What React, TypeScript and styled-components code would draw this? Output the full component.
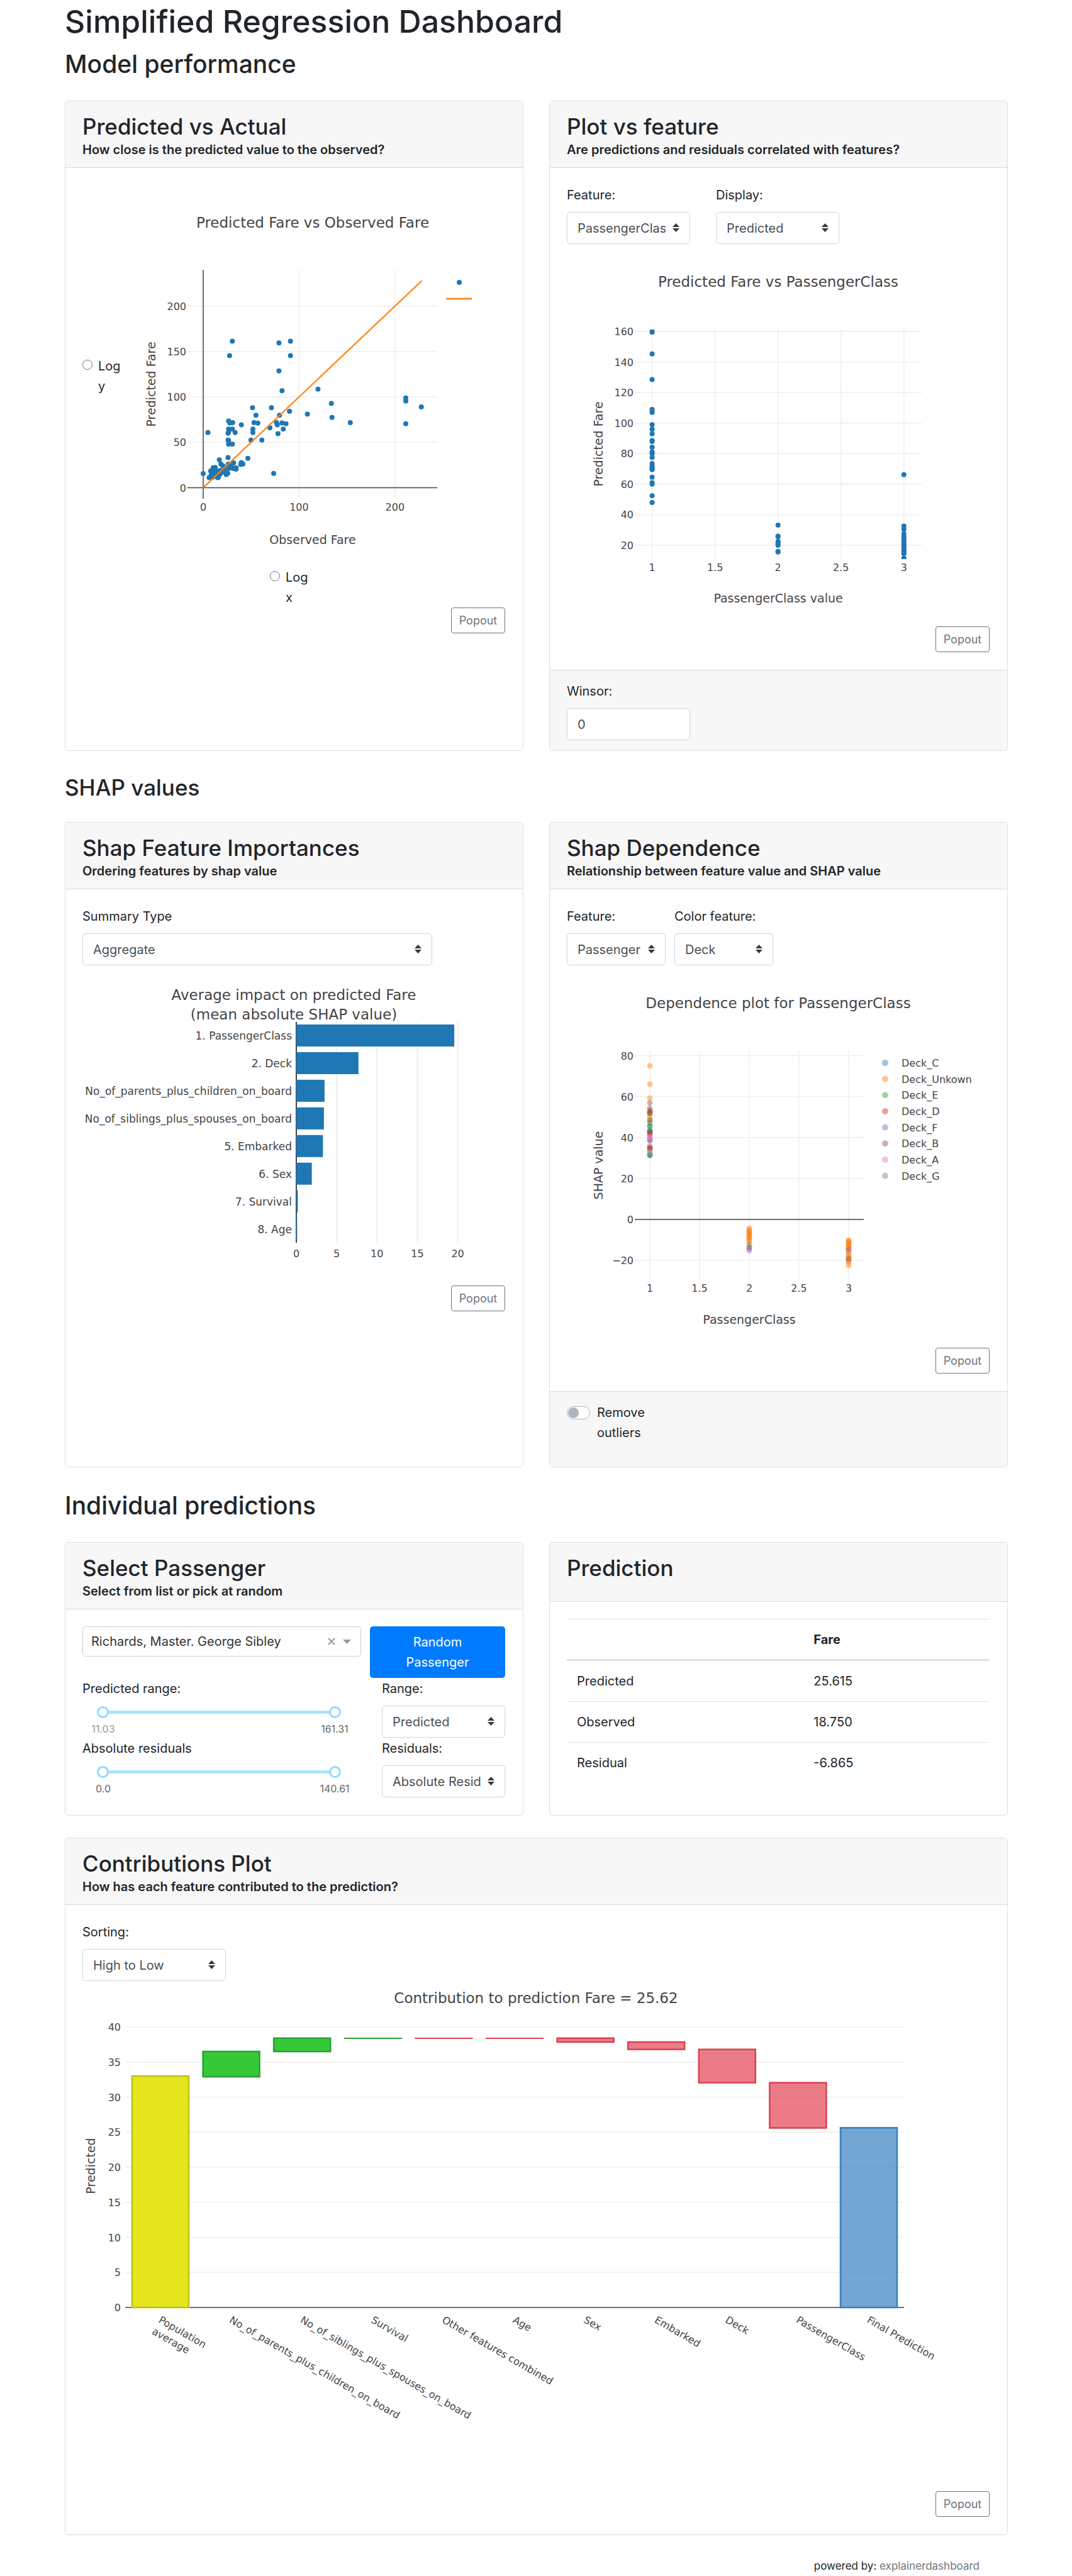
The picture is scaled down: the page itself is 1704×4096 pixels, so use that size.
import React, { useId, useState } from "react";
import styled, { createGlobalStyle } from "styled-components";

const sans = `Inter, "Liberation Sans", sans-serif`;
const plotFont = `"DejaVu Sans", Verdana, sans-serif`;

const GlobalStyle = createGlobalStyle`
  *, *::before, *::after { box-sizing: border-box; }
  body {
    margin: 0;
    background: #fff;
    color: #212529;
    font-family: ${sans};
    font-size: 20px;
    line-height: 32px;
  }
`;

const Page = styled.main`
  padding: 3px 102px 0 103px;
`;

const PageTitle = styled.h1`
  margin: 0 0 12px;
  font-size: 50px;
  line-height: 62px;
  font-weight: 500;
`;

const SectionTitle = styled.h2<{ $small?: boolean }>`
  margin: 0;
  font-size: ${(p) => (p.$small ? 35 : 39)}px;
  line-height: ${(p) => (p.$small ? 44 : 50)}px;
  font-weight: 500;
`;

const Section = styled.section`
  margin-bottom: 36px;
`;

const Deck = styled.div`
  display: grid;
  grid-template-columns: 1fr 1fr;
  gap: 41px;
  margin: 33px 0 35px;
`;

const Card = styled.article`
  display: flex;
  flex-direction: column;
  min-width: 0;
  border: 1px solid #dfdfdf;
  border-radius: 5px;
  overflow: hidden;
`;

const CardHeader = styled.header`
  padding: 20px 27px 16px;
  background: #f7f7f7;
  border-bottom: 1px solid #dadada;
`;

const CardTitle = styled.h3<{ $alone?: boolean }>`
  margin: 0 0 ${(p) => (p.$alone ? 16 : 4)}px;
  font-size: 35px;
  line-height: 41px;
  font-weight: 500;
`;

const CardSubtitle = styled.h4`
  margin: 0;
  font-size: 20px;
  line-height: 24px;
  font-weight: 600;
`;

const CardBody = styled.div`
  flex: 1;
  padding: 27px 28px 28px 27px;
`;

const CardFooter = styled.footer`
  padding: 17px 27px 16px;
  background: #f7f7f7;
  border-top: 1px solid #dadada;
`;

const FieldRow = styled.div<{ $gap: number }>`
  display: flex;
  gap: ${(p) => p.$gap}px;
`;

const FieldBox = styled.div<{ $width: number }>`
  width: ${(p) => p.$width}px;
  max-width: 100%;
`;

const FieldLabel = styled.label`
  display: block;
  margin-bottom: 11px;
`;

const SelectWrap = styled.div`
  position: relative;
`;

const SelectControl = styled.select`
  display: block;
  appearance: none;
  width: 100%;
  height: 51px;
  padding: 0 38px 0 16px;
  border: 1px solid #ced4da;
  border-radius: 5px;
  background: #fff;
  color: #495057;
  font: inherit;
`;

const Chevrons = styled.svg`
  position: absolute;
  right: 17px;
  top: 18px;
  width: 11px;
  height: 14px;
  pointer-events: none;
`;

const TextInput = styled.input`
  display: block;
  width: 196px;
  height: 51px;
  padding: 0 16px;
  border: 1px solid #ced4da;
  border-radius: 5px;
  background: #fff;
  color: #495057;
  font: inherit;
`;

const ButtonRow = styled.div`
  display: flex;
  justify-content: flex-end;
`;

const OutlineButton = styled.button`
  height: 41px;
  width: 86px;
  padding: 0;
  border: 1px solid #6c757d;
  border-radius: 4px;
  background: #fff;
  color: #6c757d;
  font-family: inherit;
  font-size: 18px;
`;

const PrimaryButton = styled.button`
  width: 215px;
  height: 82px;
  padding: 8px 40px;
  border: 0;
  border-radius: 5px;
  background: #007bff;
  color: #fff;
  font: inherit;
`;

const Chart = styled.svg`
  display: block;
  width: 100%;
  font-family: ${plotFont};
  fill: #444;
`;

const SideBySide = styled.div`
  display: flex;
  align-items: center;
`;

const ChartColumn = styled.div`
  flex: 1;
  min-width: 0;
`;

const RadioLine = styled.div<{ $width: number }>`
  display: flex;
  gap: 9px;
  width: ${(p) => p.$width}px;
  margin: 0 auto;
  flex: none;
`;

const Radio = styled.input`
  flex: none;
  width: 16px;
  height: 16px;
  margin: 6px 0 0;
`;

const RadioLabel = styled.label<{ $width: number }>`
  width: ${(p) => p.$width}px;
  overflow: hidden;
`;

const SwitchLine = styled.div`
  display: flex;
  gap: 11px;
  width: 160px;
  margin-bottom: 22px;
`;

const Switch = styled.input`
  appearance: none;
  flex: none;
  position: relative;
  width: 37px;
  height: 21px;
  margin: 6px 0 0;
  border: 1px solid #adb5bd;
  border-radius: 11px;
  background: #fff;
  &::after {
    content: "";
    position: absolute;
    top: 1px;
    left: 1px;
    width: 17px;
    height: 17px;
    border-radius: 50%;
    background: #adb5bd;
  }
  &:checked::after { left: 17px; }
`;

const PickerRow = styled.div`
  display: flex;
  align-items: flex-start;
  gap: 14px;
`;

const Combo = styled.div`
  flex: 1;
  display: flex;
  align-items: center;
  height: 48px;
  padding: 0 15px 0 13px;
  border: 1px solid #ccc;
  border-radius: 5px;
`;

const ComboInput = styled.input`
  flex: 1;
  min-width: 0;
  padding: 0;
  border: 0;
  outline: 0;
  background: none;
  color: #333;
  font: inherit;
`;

const IconButton = styled.button<{ $w: number }>`
  display: flex;
  width: ${(p) => p.$w}px;
  height: 12px;
  margin-left: 12px;
  padding: 0;
  border: 0;
  background: none;
  align-items: center;
`;

const FilterRow = styled.div`
  display: grid;
  grid-template-columns: 1fr 196px;
  gap: 1px 28px;
  margin-top: 1px;
`;

const RangeTitle = styled.div`
  line-height: 32px;
`;

const SliderBox = styled.div`
  position: relative;
  height: 19px;
  margin: 12px 37px 0 23px;
`;

const SliderTrack = styled.div`
  position: absolute;
  left: 9px;
  right: 9px;
  top: 7px;
  height: 5px;
  background: #abe2fb;
`;

const SliderInput = styled.input`
  appearance: none;
  position: absolute;
  left: 0;
  top: 0;
  width: 100%;
  height: 19px;
  margin: 0;
  background: none;
  pointer-events: none;
  &::-webkit-slider-thumb {
    appearance: none;
    width: 19px;
    height: 19px;
    border: 3px solid #96dbfa;
    border-radius: 50%;
    background: #fff;
    pointer-events: auto;
  }
`;

const Marks = styled.div`
  display: flex;
  justify-content: space-between;
  margin: 7px 20px 0 6px;
  font-size: 16px;
  line-height: 20px;
`;

const Mark = styled.span<{ $muted?: boolean }>`
  width: 54px;
  text-align: center;
  color: ${(p) => (p.$muted ? "#999" : "#666")};
`;

const DataTable = styled.table`
  width: 100%;
  border-collapse: collapse;
  th, td {
    padding: 16px;
    text-align: left;
    border-top: 1px solid #dee2e6;
  }
  thead th { border-bottom: 3px solid #dee2e6; padding-bottom: 15px; }
  th:first-child { width: 56%; }
  tbody th { font-weight: 400; }
`;

const Credits = styled.footer`
  padding: 0 45px 2px 0;
  text-align: right;
  font-size: 17px;
  line-height: 27px;
`;

const CreditLink = styled.a`
  color: #6c757d;
  text-decoration: none;
`;

type CardShellProps = {
  title: string;
  subtitle?: string;
  footer?: React.ReactNode;
  children: React.ReactNode;
};

function CardShell({ title, subtitle, footer, children }: CardShellProps) {
  return (
    <Card>
      <CardHeader>
        <CardTitle $alone={!subtitle}>{title}</CardTitle>
        {subtitle && <CardSubtitle>{subtitle}</CardSubtitle>}
      </CardHeader>
      <CardBody>{children}</CardBody>
      {footer && <CardFooter>{footer}</CardFooter>}
    </Card>
  );
}

function SelectField({ label, width, options }: { label: string; width: number; options: string[] }) {
  const id = useId();
  return (
    <FieldBox $width={width}>
      <FieldLabel htmlFor={id}>{label}</FieldLabel>
      <SelectWrap>
        <SelectControl id={id} defaultValue={options[0]}>
          {options.map((o) => (
            <option key={o}>{o}</option>
          ))}
        </SelectControl>
        <Chevrons viewBox="0 0 11 14" aria-hidden="true">
          <path d="M0 6 5.5 0 11 6zM0 8l5.500 6L11 8z" fill="#343a40" />
        </Chevrons>
      </SelectWrap>
    </FieldBox>
  );
}

function Popout() {
  return (
    <ButtonRow>
      <OutlineButton type="button">Popout</OutlineButton>
    </ButtonRow>
  );
}

type Scale = (v: number) => number;
const linear = (zero: number, unit: number): Scale => (v) => zero + v * unit;

type Frame = { left: number; right: number; top: number; bottom: number };

type AxesProps = {
  frame: Frame;
  x: Scale;
  y: Scale;
  xTicks: number[];
  yTicks: number[];
};

const fmt = (n: number) => String(n).replace("-", "−");

function Axes({ frame, x, y, xTicks, yTicks }: AxesProps) {
  return (
    <g fontSize="16">
      {xTicks.map((t) => (
        <g key={`x${t}`}>
          <line x1={x(t)} x2={x(t)} y1={frame.top} y2={frame.bottom} stroke="#eee" strokeWidth="1.5" />
          <text x={x(t)} y={frame.bottom + 19} textAnchor="middle">{fmt(t)}</text>
        </g>
      ))}
      {yTicks.map((t) => (
        <g key={`y${t}`}>
          <line x1={frame.left} x2={frame.right} y1={y(t)} y2={y(t)} stroke="#eee" strokeWidth="1.5" />
          <text x={frame.left - 2} y={y(t) + 6} textAnchor="end">{fmt(t)}</text>
        </g>
      ))}
    </g>
  );
}

function AxisTitle({ x, y, text, vertical }: { x: number; y: number; text: string; vertical?: boolean }) {
  return (
    <text fontSize="19" textAnchor="middle" transform={`translate(${x} ${y})${vertical ? " rotate(-90)" : ""}`}>
      {text}
    </text>
  );
}

function PlotTitle({ x, y, text }: { x: number; y: number; text: string }) {
  return <text x={x} y={y} fontSize="23" textAnchor="middle">{text}</text>;
}

const fares: [number, number][] = [
  [30.4, 161.4], [27.5, 145.4], [91, 161.4], [91, 145.4], [79, 159.5], [79, 128.6],
  [82.2, 106.8], [119.7, 108.6], [51.5, 88.1], [71.2, 88.1], [55, 79.8], [79.6, 79.8], [90, 84.2],
  [108.7, 81], [133.7, 92.9], [134.3, 77.4], [153.4, 71.7], [211.3, 98.8], [211.3, 95.5],
  [211.3, 70.5], [227.5, 89], [26.5, 73.5], [27.8, 71.4], [30.7, 71.7], [39.8, 69.3], [53, 71.7],
  [57, 71.1], [76.4, 71.7], [77.3, 69.3], [82.2, 71.4], [86.4, 70.5], [26.5, 64.6], [30.4, 64.6],
  [51.8, 64.6], [69.6, 66], [83.5, 64.6], [25.9, 60.1], [26.5, 61.3], [33.3, 60.7], [51.8, 60.7],
  [4.9, 60.7], [78, 59.5], [25.9, 52.4], [26.5, 52], [49.8, 52.4], [61.2, 52.4], [26.5, 47.9],
  [30.4, 47.9], [25.9, 33.3], [16.8, 30.7], [46.6, 32.4], [73.5, 15.8], [0, 15.5], [39.8, 27.7],
  [39.2, 25.6], [41.4, 26.2], [34.3, 20.5], [34.3, 22], [31.4, 21.1], [31.7, 27.4], [10.4, 22],
  [12.6, 22.3], [7.8, 18.5], [10, 19.4], [18.5, 25.9], [20.7, 24.1], [26.2, 25.9], [28.8, 24.1],
  [30.4, 22], [27.2, 21.4], [23.9, 19.3], [21.7, 20.5], [23.3, 17], [25.6, 16], [23.9, 14.6],
  [19.1, 17], [17.5, 14.9], [15.2, 17.6], [13.3, 19.3], [11, 17], [8.7, 15.5], [6.2, 11],
  [7.8, 12.5], [10, 11.6], [12.6, 14], [15.2, 11], [15.9, 11.6], [14.2, 16.4], [9.4, 14],
  [12, 20], [22.3, 22], [18, 19], [14.5, 12],
];

function PredictedVsActual() {
  const x = linear(132, 1.524);
  const y = linear(481.500, -1.4436);
  const frame = { left: 107, right: 504, top: 135, bottom: 499 };
  return (
    <Chart viewBox="0 0 612 608" role="img" aria-label="Predicted Fare vs Observed Fare">
      <PlotTitle x={306} y={68} text="Predicted Fare vs Observed Fare" />
      <Axes frame={frame} x={x} y={y} xTicks={[0, 100, 200]} yTicks={[0, 50, 100, 150, 200]} />
      <path d={`M${x(0)} ${frame.top}V${frame.bottom}M${frame.left} ${y(0)}H${frame.right}`} stroke="#444" strokeWidth="1.5" />
      {fares.map(([a, b], i) => (
        <circle key={i} cx={x(a)} cy={y(b)} r="4" fill="#1f77b4" />
      ))}
      <line x1={x(0)} y1={y(0)} x2={x(228)} y2={y(228)} stroke="#ff7f0e" strokeOpacity="0.9" strokeWidth="2.500" />
      <circle cx="539" cy="155" r="4" fill="#1f77b4" />
      <line x1="518" x2="559" y1="181" y2="181" stroke="#ff7f0e" strokeWidth="2.500" />
      <AxisTitle x={306} y={571} text="Observed Fare" />
      <AxisTitle x={56} y={317} text="Predicted Fare" vertical />
    </Chart>
  );
}

const byClass: Record<number, number[]> = {
  1: [161.3, 159.5, 145.3, 128.5, 109, 107, 99, 96, 93, 88.6, 88, 84.2, 81, 80, 77.5, 73.5, 72, 71, 70, 69.5, 64.6, 61, 60, 52.4, 48],
  2: [33.2, 26, 25.5, 22.5, 21.5, 20.5, 20, 16, 15.5],
  3: [66.2, 32.5, 30.5, 27.5, 25.5, 24, 22.5, 21, 20, 19, 18, 17, 16, 15, 14.5, 11.5, 11],
};

function PlotVsFeature() {
  const x = linear(-64.5, 200.1);
  const y = linear(527.5, -2.4275);
  const frame = { left: 108, right: 564, top: 136, bottom: 501 };
  return (
    <Chart viewBox="0 0 672 608" role="img" aria-label="Predicted Fare vs PassengerClass">
      <clipPath id="feature-clip">
        <rect x={frame.left} y={frame.top} width={frame.right - frame.left} height={frame.bottom - frame.top} />
      </clipPath>
      <PlotTitle x={336} y={68} text="Predicted Fare vs PassengerClass" />
      <Axes frame={frame} x={x} y={y} xTicks={[1, 1.5, 2, 2.5, 3]} yTicks={[20, 40, 60, 80, 100, 120, 140, 160]} />
      <g clipPath="url(#feature-clip)" fill="#1f77b4">
        {Object.entries(byClass).map(([c, vals]) =>
          vals.map((v) => <circle key={`${c}-${v}`} cx={x(Number(c))} cy={y(v)} r="4" />)
        )}
      </g>
      <AxisTitle x={336} y={570} text="PassengerClass value" />
      <AxisTitle x={57} y={318} text="Predicted Fare" vertical />
    </Chart>
  );
}

const importances: [string, number][] = [
  ["1. PassengerClass", 19.57],
  ["2. Deck", 7.7],
  ["3. No_of_parents_plus_children_on_board", 3.5],
  ["4. No_of_siblings_plus_spouses_on_board", 3.42],
  ["5. Embarked", 3.3],
  ["6. Sex", 1.92],
  ["7. Survival", 0.19],
  ["8. Age", 0.1],
];

function ShapImportances() {
  const x = linear(340, 12.83);
  return (
    <Chart viewBox="0 0 672 509" role="img" aria-label="Average impact on predicted Fare">
      <PlotTitle x={336} y={55} text="Average impact on predicted Fare" />
      <PlotTitle x={336} y={86} text="(mean absolute SHAP value)" />
      <g fontSize="16">
        {[0, 5, 10, 15, 20].map((t) => (
          <g key={t}>
            <line x1={x(t)} x2={x(t)} y1="90" y2="441" stroke={t ? "#eee" : "#444"} strokeWidth="2" />
            <text x={x(t)} y="464" textAnchor="middle">{t}</text>
          </g>
        ))}
      </g>
      <g fontSize="17">
        {importances.map(([name, v], i) => (
          <g key={name}>
            <rect x={x(0)} y={94 + i * 43.95} width={x(v) - x(0)} height="35" fill="#1f77b4" />
            <text x="333" y={118 + i * 43.95} textAnchor="end">{name}</text>
          </g>
        ))}
      </g>
    </Chart>
  );
}

const decks: [string, string][] = [
  ["Deck_C", "#1f77b4"],
  ["Deck_Unkown", "#ff7f0e"],
  ["Deck_E", "#2ca02c"],
  ["Deck_D", "#d62728"],
  ["Deck_F", "#9467bd"],
  ["Deck_B", "#8c564b"],
  ["Deck_A", "#e377c2"],
  ["Deck_G", "#7f7f7f"],
];

// [passenger class, SHAP value, deck index]
const shapPoints: [number, number, number][] = [
  [1, 45.6, 0], [1, 43.5, 0], [1, 42.8, 0], [1, 38.4, 0], [1, 33, 0], [1, 31.6, 0],
  [1, 75, 1], [1, 66, 1], [1, 59.3, 1], [1, 52.3, 1], [1, 51.4, 1], [1, 50, 1], [1, 48.4, 1],
  [1, 48.6, 2], [1, 45.6, 2], [1, 43.3, 2], [1, 34.8, 2], [1, 31.4, 2], [1, 31.3, 2],
  [1, 42, 3], [1, 41.300, 3], [1, 39, 3], [1, 35.7, 3], [1, 34.8, 3],
  [1, 56.9, 5], [1, 54.2, 5], [1, 53.2, 5], [1, 52.4, 5], [1, 51.9, 5], [1, 47.4, 5], [1, 42.6, 5], [1, 34.6, 5],
  [1, 40.5, 6], [1, 39.8, 6], [1, 39.2, 6], [1, 33, 6],
  [2, -4.2, 1], [2, -5, 1], [2, -5.8, 1], [2, -6.1, 1], [2, -6.8, 1], [2, -7.5, 1], [2, -8, 1], [2, -8.6, 1],
  [2, -9.2, 1], [2, -10, 1], [2, -10.8, 1], [2, -12.2, 2], [2, -13.6, 3], [2, -14.2, 4], [2, -15.2, 4],
  [3, -10.2, 1], [3, -10.5, 1], [3, -11, 1], [3, -11.5, 1], [3, -12, 1], [3, -12.6, 1], [3, -13.2, 1], [3, -13.8, 1],
  [3, -14.5, 1], [3, -15.2, 1], [3, -16.2, 1], [3, -17, 1], [3, -18, 1], [3, -19.3, 7], [3, -18.8, 1], [3, -19.5, 1],
  [3, -20.3, 1], [3, -21, 1], [3, -22.5, 1], [3, -14.6, 4], [3, -19.2, 7],
];

function ShapDependence() {
  const x = linear(-26, 158);
  const y = linear(404, -3.256);
  const frame = { left: 108, right: 472, top: 135, bottom: 500 };
  return (
    <Chart viewBox="0 0 672 608" role="img" aria-label="Dependence plot for PassengerClass">
      <PlotTitle x={336} y={68} text="Dependence plot for PassengerClass" />
      <Axes frame={frame} x={x} y={y} xTicks={[1, 1.5, 2, 2.5, 3]} yTicks={[-20, 0, 20, 40, 60, 80]} />
      <line x1={frame.left} x2={frame.right} y1={y(0)} y2={y(0)} stroke="#444" strokeWidth="1.5" />
      {shapPoints.map(([c, v, d], i) => (
        <circle key={i} cx={x(c)} cy={y(v)} r="4.500" fill={decks[d][1]} fillOpacity="0.45" />
      ))}
      {decks.map(([name, color], i) => (
        <g key={name} fontSize="16">
          <circle cx="506" cy={155 + i * 25.65} r="5" fill={color} fillOpacity="0.45" />
          <text x="532" y={161 + i * 25.65}>{name}</text>
        </g>
      ))}
      <AxisTitle x={290} y={570} text="PassengerClass" />
      <AxisTitle x={57} y={318} text="SHAP value" vertical />
    </Chart>
  );
}

const tones = {
  base: ["rgba(230,230,30,1)", "rgba(190,190,30,1)"],
  up: ["rgba(55,200,55,1)", "rgba(40,160,50,1)"],
  down: ["rgba(226,68,84,0.7)", "rgba(219,64,82,1)"],
  final: ["rgba(55,128,191,0.7)", "rgba(55,128,191,1)"],
};

const contributions: { name: string[]; from: number; to: number; tone: keyof typeof tones }[] = [
  { name: ["Population", "average"], from: 0, to: 33, tone: "base" },
  { name: ["No_of_parents_plus_children_on_board"], from: 32.9, to: 36.5, tone: "up" },
  { name: ["No_of_siblings_plus_spouses_on_board"], from: 36.5, to: 38.4, tone: "up" },
  { name: ["Survival"], from: 38.4, to: 38.4, tone: "up" },
  { name: ["Other features combined"], from: 38.4, to: 38.4, tone: "down" },
  { name: ["Age"], from: 38.4, to: 38.4, tone: "down" },
  { name: ["Sex"], from: 37.85, to: 38.4, tone: "down" },
  { name: ["Embarked"], from: 36.8, to: 37.85, tone: "down" },
  { name: ["Deck"], from: 32.05, to: 36.8, tone: "down" },
  { name: ["PassengerClass"], from: 25.6, to: 32.05, tone: "down" },
  { name: ["Final Prediction"], from: 0, to: 25.62, tone: "final" },
];

function ContributionsChart() {
  const y = linear(519, -11.15);
  return (
    <Chart viewBox="0 0 1442 811" role="img" aria-label="Contribution to prediction">
      <PlotTitle x={721} y={35} text="Contribution to prediction Fare = 25.62" />
      <g fontSize="16">
        {[0, 5, 10, 15, 20, 25, 30, 35, 40].map((t) => (
          <g key={t}>
            <line x1="68" x2="1306" y1={y(t)} y2={y(t)} stroke={t ? "#eee" : "#444"} strokeWidth="1.5" />
            <text x="61" y={y(t) + 6} textAnchor="end">{t}</text>
          </g>
        ))}
        {contributions.map((c, i) => {
          const cx = 124 + i * 112.6;
          const [fill, stroke] = tones[c.tone];
          return (
            <g key={c.name[0]}>
              {c.from === c.to ? (
                <rect x={cx - 46} width="92" y={Math.round(y(c.to)) - 1} height="2" fill={stroke} />
              ) : (
                <rect
                  x={cx - 45}
                  width="90"
                  y={y(c.to)}
                  height={y(c.from) - y(c.to)}
                  fill={fill}
                  stroke={stroke}
                  strokeWidth="2.5"
                />
              )}
              <g transform={`translate(${cx - 4} 542) rotate(30)`}>
                {c.name.map((line, n) => (
                  <text key={line} y={n * 21}>{line}</text>
                ))}
              </g>
            </g>
          );
        })}
      </g>
      <AxisTitle x={20} y={294} text="Predicted" vertical />
    </Chart>
  );
}

function RangeFilter({ title, low, high, muted }: { title: string; low: string; high: string; muted?: boolean }) {
  return (
    <div>
      <RangeTitle>{title}</RangeTitle>
      <SliderBox>
        <SliderTrack />
        <SliderInput type="range" min={low} max={high} step="any" defaultValue={low} aria-label={`${title} minimum`} />
        <SliderInput type="range" min={low} max={high} step="any" defaultValue={high} aria-label={`${title} maximum`} />
      </SliderBox>
      <Marks>
        <Mark $muted={muted}>{low}</Mark>
        <Mark>{high}</Mark>
      </Marks>
    </div>
  );
}

function PassengerPicker() {
  const [name, setName] = useState("Richards, Master. George Sibley");
  return (
    <>
      <PickerRow>
        <Combo>
          <ComboInput aria-label="Passenger" value={name} onChange={(e) => setName(e.target.value)} />
          <IconButton type="button" $w={12} aria-label="Clear" onClick={() => setName("")}>
            <svg width="12" height="12" viewBox="0 0 12 12">
              <path d="M1 1l10 10M11 1L1 11" stroke="#999" strokeWidth="2" />
            </svg>
          </IconButton>
          <IconButton type="button" $w={13} aria-label="Open list">
            <svg width="13" height="7" viewBox="0 0 13 7">
              <path d="M0 0h13L6.500 7z" fill="#999" />
            </svg>
          </IconButton>
        </Combo>
        <PrimaryButton type="button">Random Passenger</PrimaryButton>
      </PickerRow>
      <FilterRow>
        <RangeFilter title="Predicted range:" low="11.03" high="161.31" muted />
        <SelectField label="Range:" width={196} options={["Predicted", "Observed"]} />
        <RangeFilter title="Absolute residuals" low="0.0" high="140.61" />
        <SelectField label="Residuals:" width={196} options={["Absolute Residuals", "Residuals"]} />
      </FilterRow>
    </>
  );
}

export default function App() {
  return (
    <>
      <GlobalStyle />
      <Page>
        <PageTitle>Simplified Regression Dashboard</PageTitle>
        <Section>
          <SectionTitle>Model performance</SectionTitle>
          <Deck>
            <CardShell title="Predicted vs Actual" subtitle="How close is the predicted value to the observed?">
              <SideBySide>
                <RadioLine $width={60}>
                  <Radio type="radio" id="log-y" />
                  <RadioLabel htmlFor="log-y" $width={34}>Log y</RadioLabel>
                </RadioLine>
                <ChartColumn>
                  <PredictedVsActual />
                </ChartColumn>
              </SideBySide>
              <SideBySide>
                <RadioLine $width={60} aria-hidden="true" />
                <ChartColumn>
                  <RadioLine $width={136}>
                    <Radio type="radio" id="log-x" />
                    <RadioLabel htmlFor="log-x" $width={46}>Log x</RadioLabel>
                  </RadioLine>
                </ChartColumn>
              </SideBySide>
              <Popout />
            </CardShell>
            <CardShell
              title="Plot vs feature"
              subtitle="Are predictions and residuals correlated with features?"
              footer={
                <>
                  <FieldLabel htmlFor="winsor">Winsor:</FieldLabel>
                  <TextInput id="winsor" defaultValue="0" />
                </>
              }
            >
              <FieldRow $gap={41}>
                <SelectField label="Feature:" width={196} options={["PassengerClass", "Deck", "Sex", "Age"]} />
                <SelectField label="Display:" width={196} options={["Predicted", "Observed", "Residuals"]} />
              </FieldRow>
              <PlotVsFeature />
              <Popout />
            </CardShell>
          </Deck>
        </Section>
        <Section>
          <SectionTitle $small>SHAP values</SectionTitle>
          <Deck>
            <CardShell title="Shap Feature Importances" subtitle="Ordering features by shap value">
              <SelectField label="Summary Type" width={556} options={["Aggregate", "Detailed"]} />
              <ShapImportances />
              <Popout />
            </CardShell>
            <CardShell
              title="Shap Dependence"
              subtitle="Relationship between feature value and SHAP value"
              footer={
                <SwitchLine>
                  <Switch type="checkbox" role="switch" id="outliers" />
                  <label htmlFor="outliers">Remove outliers</label>
                </SwitchLine>
              }
            >
              <FieldRow $gap={14}>
                <SelectField label="Feature:" width={157} options={["PassengerClass", "Deck", "Sex", "Age"]} />
                <SelectField label="Color feature:" width={157} options={["Deck", "Embarked", "Sex"]} />
              </FieldRow>
              <ShapDependence />
              <Popout />
            </CardShell>
          </Deck>
        </Section>
        <Section>
          <SectionTitle>Individual predictions</SectionTitle>
          <Deck>
            <CardShell title="Select Passenger" subtitle="Select from list or pick at random">
              <PassengerPicker />
            </CardShell>
            <CardShell title="Prediction">
              <DataTable>
                <thead>
                  <tr>
                    <th></th>
                    <th scope="col">Fare</th>
                  </tr>
                </thead>
                <tbody>
                  <tr>
                    <th scope="row">Predicted</th>
                    <td>25.615</td>
                  </tr>
                  <tr>
                    <th scope="row">Observed</th>
                    <td>18.750</td>
                  </tr>
                  <tr>
                    <th scope="row">Residual</th>
                    <td>-6.865</td>
                  </tr>
                </tbody>
              </DataTable>
            </CardShell>
          </Deck>
          <CardShell title="Contributions Plot" subtitle="How has each feature contributed to the prediction?">
            <SelectField label="Sorting:" width={228} options={["High to Low", "Low to High", "Absolute"]} />
            <ContributionsChart />
            <Popout />
          </CardShell>
        </Section>
        <Credits>
          powered by: <CreditLink href="#explainerdashboard">explainerdashboard</CreditLink>
        </Credits>
      </Page>
    </>
  );
}
